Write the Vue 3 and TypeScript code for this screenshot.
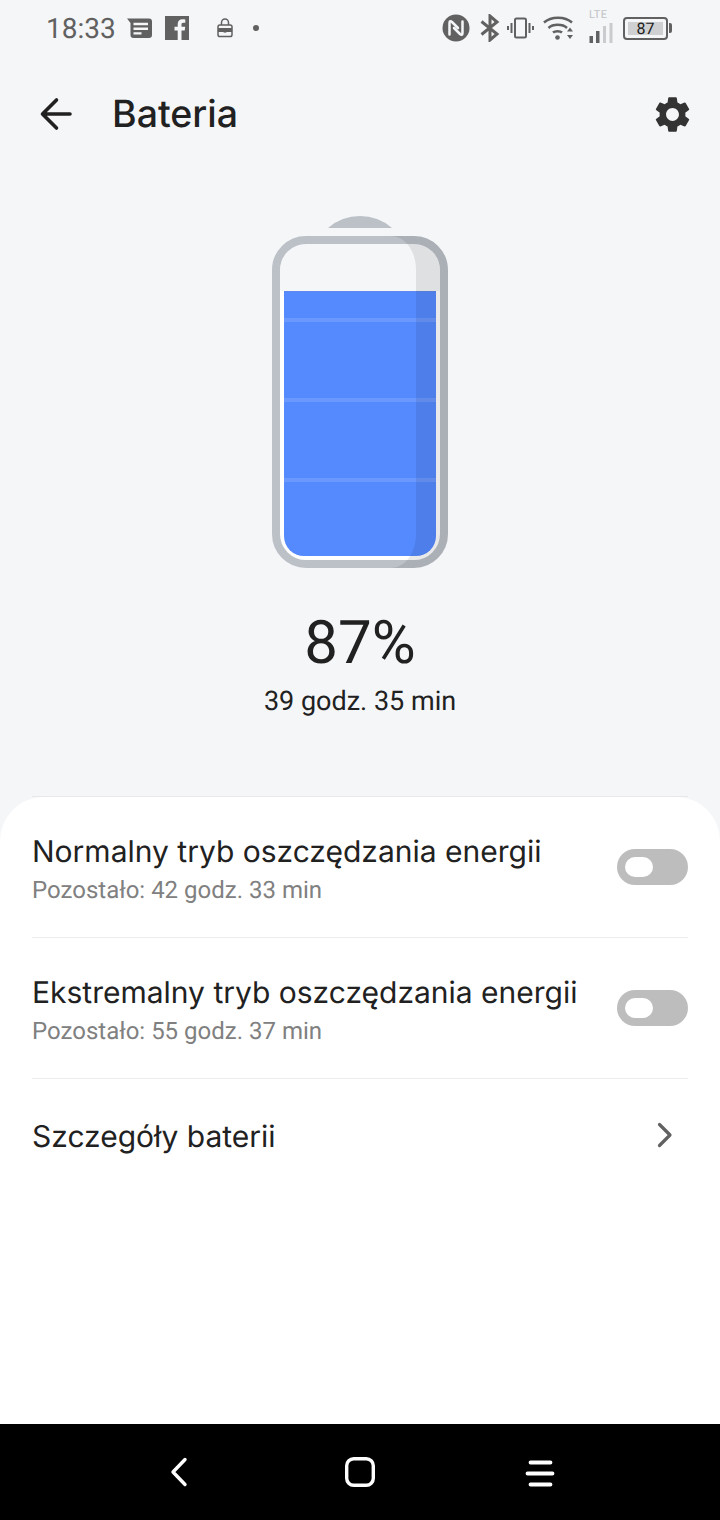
<script setup lang="ts">
interface Mode { title: string; sub: string }
const modes: Mode[] = [
  { title: 'Normalny tryb oszczędzania energii', sub: 'Pozostało: 42 godz. 33 min' },
  { title: 'Ekstremalny tryb oszczędzania energii', sub: 'Pozostało: 55 godz. 37 min' },
]
</script>

<template>
  <div class="page">
    <div class="status">
      <div class="status-left">
        <span class="time">18:33</span>
        <svg class="ic-msg" width="26" height="22" viewBox="0 0 26 22"><path fill="#616161" d="M0 1.500h22a3 3 0 0 1 3 3V18a3 3 0 0 1-3 3H6.500a3 3 0 0 1-3-3V6z"/><path fill="none" stroke="#f5f6f8" stroke-width="2.400" d="M6.500 7h14.500M6.500 11.700h14.500M6.500 16.400h8"/></svg>
        <svg class="ic-fb" width="24" height="24" viewBox="0 0 24 24"><rect width="24" height="24" fill="#616161"/><path fill="#f5f6f8" d="M16.500 24v-9.500h3.200l.5-3.700h-3.700V8.500c0-1.100.3-1.800 1.800-1.800h2V3.400c-.4 0-1.500-.2-2.800-.2-2.900 0-4.800 1.700-4.800 4.900v2.700H9.500v3.700h3.200V24z"/></svg>
        <svg class="ic-lock" width="16" height="20" viewBox="0 0 16 20"><path fill="none" stroke="#616161" stroke-width="1.500" d="M4.500 7V4.500a3.500 3.500 0 0 1 7 0V7"/><rect x="1" y="7" width="14" height="11.500" rx="1.800" fill="none" stroke="#616161" stroke-width="1.500"/><rect x="1" y="10" width="14" height="4" fill="#616161"/><circle cx="8" cy="12.500" r="2.200" fill="#616161"/></svg>
        <span class="dot"></span>
      </div>
      <div class="status-right">
        <svg class="ic-nfc" width="28" height="28" viewBox="0 0 28 28"><circle cx="14" cy="14" r="13.500" fill="#616161"/><path fill="none" stroke="#f5f6f8" stroke-width="2.500" stroke-linecap="round" stroke-linejoin="round" d="M7.500 20.500V9c0-2 1-2.300 2.500-1l6 6M20.500 7.500V19c0 2-1 2.300-2.500 1l-6-6"/></svg>
        <svg class="ic-bt" width="20" height="28" viewBox="0 0 20 28"><path fill="none" stroke="#616161" stroke-width="3" d="M1.500 7.500 17 20l-7 6V2l7 6L1.500 20.500"/></svg>
        <svg class="ic-vib" width="28" height="24" viewBox="0 0 28 24"><rect x="8" y="2.500" width="11" height="19" rx="1.500" fill="none" stroke="#616161" stroke-width="2"/><path fill="none" stroke="#616161" stroke-width="2" d="M4.500 7v10M1 10v4M22.500 7v10M26 10v4"/></svg>
        <svg class="ic-wifi" width="31" height="26" viewBox="0 0 31 26"><path fill="none" stroke="#616161" stroke-width="2.500" d="M1 7.500c7-6.500 21-6.500 28 0M5.500 13c4.500-4.200 14-4.200 18.500 0"/><path fill="none" stroke="#616161" stroke-width="2.500" d="M10 17.500c2-1.800 7-1.800 9 0"/><circle cx="14.500" cy="22.500" r="2.300" fill="#616161"/><path fill="#616161" d="M27 12.500l3 4h-6zM27 24l-3-4h6z"/></svg>
        <div class="signal">
          <span class="lte">LTE</span>
          <svg width="24" height="21" viewBox="0 0 24 21"><rect x="0.500" y="14" width="3.500" height="7" fill="#616161"/><rect x="7" y="9" width="3.500" height="12" fill="#616161"/><rect x="14" y="4" width="3" height="17" fill="#c9cbce"/><rect x="20.500" y="1" width="3" height="20" fill="#c9cbce"/></svg>
        </div>
        <div class="batt-mini">
          <div class="batt-body"><span class="batt-fill">87</span></div>
          <span class="batt-tip"></span>
        </div>
      </div>
    </div>

    <header class="bar">
      <svg class="back" width="34" height="34" viewBox="0 0 34 34"><path fill="none" stroke="#212121" stroke-width="3.600" stroke-linecap="round" stroke-linejoin="round" d="M31 17H4M17.500 3 3.500 17l14 14"/></svg>
      <h1 class="title">Bateria</h1>
      <svg class="gear" width="43" height="43" viewBox="0 0 24 24"><path fill="#333" d="M19.140 12.940c.04-.3.060-.61.060-.94 0-.32-.02-.64-.07-.94l2.030-1.580a.49.490 0 0 0 .12-.61l-1.920-3.320a.488.488 0 0 0-.59-.22l-2.390.96c-.5-.38-1.030-.7-1.620-.94l-.36-2.540a.484.484 0 0 0-.48-.41h-3.840c-.24 0-.43.170-.47.410l-.36 2.540c-.59.240-1.130.57-1.620.94l-2.390-.96c-.22-.08-.47 0-.59.220L2.740 8.870c-.12.210-.08.470.12.610l2.030 1.580c-.05.300-.09.630-.09.940s.02.640.07.940l-2.030 1.580a.49.490 0 0 0-.12.610l1.920 3.320c.12.220.37.290.59.220l2.390-.96c.5.380 1.030.7 1.620.94l.36 2.540c.05.240.24.410.48.410h3.840c.24 0 .44-.17.470-.41l.36-2.540c.59-.24 1.130-.56 1.620-.94l2.390.96c.22.080.47 0 .59-.22l1.920-3.320c.12-.22.07-.47-.12-.61l-2.010-1.580zM12 15.600A3.610 3.610 0 0 1 8.400 12c0-1.980 1.620-3.600 3.600-3.600s3.600 1.620 3.600 3.600-1.620 3.600-3.600 3.600z"/></svg>
    </header>

    <section class="hero">
      <svg class="battery" width="176" height="352" viewBox="0 0 176 352">
        <path fill="#bcc1c8" d="M56 12A48.700 48.700 0 0 1 120 12z"/>
        <rect x="8" y="28" width="160" height="316" rx="26" fill="#fff"/>
        <path fill="#f5f6f8" d="M8 75V54a26 26 0 0 1 26-26h108a26 26 0 0 1 26 26v21z"/>
        <path fill="#558aff" d="M12 75h152v245a20 20 0 0 1-20 20H32a20 20 0 0 1-20-20z"/>
        <rect x="12" y="75" width="152" height="1" fill="#5f88ee"/>
        <rect x="12" y="102" width="152" height="4" fill="#6b98ff"/>
        <rect x="12" y="182" width="152" height="4" fill="#6b98ff"/>
        <rect x="12" y="262" width="152" height="4" fill="#6b98ff"/>
        <rect x="4" y="24" width="168" height="324" rx="30" fill="none" stroke="#bcc1c8" stroke-width="8"/>
        <path fill="#000" fill-opacity=".085" d="M118 20h24a34 34 0 0 1 34 34v264a34 34 0 0 1-34 34h-24c16 0 26-16 26-34V54c0-18-10-34-26-34z"/>
      </svg>
      <div class="percent">87%</div>
      <div class="remain">39 godz. 35 min</div>
    </section>

    <main class="sheet">
      <div v-for="m in modes" :key="m.title" class="row">
        <div class="row-text">
          <div class="row-title">{{ m.title }}</div>
          <div class="row-sub">{{ m.sub }}</div>
        </div>
        <div class="toggle"><span class="knob"></span></div>
      </div>
      <div class="row row-link">
        <div class="row-title">Szczegóły baterii</div>
        <svg class="chev" width="18" height="26" viewBox="0 0 18 26"><path fill="none" stroke="#616161" stroke-width="3.200" stroke-linecap="round" stroke-linejoin="round" d="M3.500 2.500 14 13 3.500 23.500"/></svg>
      </div>
    </main>

    <nav class="nav">
      <svg class="nav-back" width="20" height="30" viewBox="0 0 20 30"><path fill="none" stroke="#fff" stroke-width="3.400" stroke-linecap="round" stroke-linejoin="round" d="M17 2.500 5 15l12 12.500"/></svg>
      <svg class="nav-home" width="32" height="32" viewBox="0 0 32 32"><rect x="2.700" y="2.700" width="26.600" height="26.600" rx="7" fill="none" stroke="#fff" stroke-width="3.400"/></svg>
      <svg class="nav-menu" width="30" height="30" viewBox="0 0 30 30"><path fill="none" stroke="#fff" stroke-width="3.800" stroke-linecap="round" d="M5.500 5.500h20M2.500 16.500h25M5.500 27.500h20"/></svg>
    </nav>
  </div>
</template>

<style scoped>
.page {
  width: 720px;
  height: 1520px;
  display: flex;
  flex-direction: column;
  background: #f5f6f8;
  font-family: Inter, "Noto Sans", sans-serif;
  color: #212121;
  overflow: hidden;
  text-rendering: geometricPrecision;
}
.status {
  height: 56px;
  flex: none;
  display: flex;
  align-items: center;
  justify-content: space-between;
  padding: 0 48px 0 46px;
}
.status-left, .status-right { display: flex; align-items: center; }
.time {
  font-family: Roboto, sans-serif;
  font-size: 28px;
  color: #616161;
  width: 69px;
  margin-right: 12px;
}
.ic-fb { margin-left: 12px; }
.ic-lock { margin-left: 28px; }
.dot {
  width: 6px;
  height: 6px;
  border-radius: 50%;
  background: #616161;
  margin-left: 20px;
}
.ic-bt { margin-left: 10px; }
.ic-vib { margin-left: 7px; }
.ic-wifi { margin-left: 8px; }
.signal {
  position: relative;
  width: 24px;
  height: 30px;
  display: flex;
  align-items: flex-end;
  margin-left: 15px;
}
.lte {
  position: absolute;
  top: -5px;
  left: 0;
  font-family: Roboto, sans-serif;
  font-size: 11px;
  color: #c0c2c5;
  letter-spacing: 0.4px;
}
.batt-mini { display: flex; align-items: center; margin-left: 10px; }
.batt-body {
  width: 45px;
  height: 23px;
  box-sizing: border-box;
  border: 2px solid #616161;
  border-radius: 4px;
  padding: 3px;
  display: flex;
}
.batt-fill {
  flex: 1;
  background: #cfd0d2;
  font-family: Roboto, sans-serif;
  font-size: 16px;
  line-height: 13px;
  text-align: center;
  color: #212121;
}
.batt-tip { width: 3px; height: 10px; background: #616161; border-radius: 0 2px 2px 0; margin-left: 1px; }
.bar {
  height: 116px;
  flex: none;
  display: flex;
  align-items: center;
  padding: 0 26px 0 39px;
  box-sizing: border-box;
}
.title {
  flex: 1;
  margin: 0 0 0 39px;
  font-size: 37.500px;
  font-weight: 500;
  color: #212121;
}
.hero {
  height: 625px;
  flex: none;
  display: flex;
  flex-direction: column;
  align-items: center;
}
.battery { margin-top: 44px; display: block; }
.percent {
  margin-top: 40px;
  font-size: 60px;
  line-height: 70px;
  font-family: Roboto, sans-serif;
  color: #212121;
}
.remain {
  font-size: 27px;
  line-height: 36px;
  margin-top: 5px;
  color: #212121;
  font-family: Roboto, sans-serif;
}
.sheet {
  flex: 1;
  background: #fff;
  border-radius: 44px 44px 0 0;
  padding: 0 32px;
  position: relative;
}
.sheet::before {
  content: "";
  position: absolute;
  top: -1px;
  left: 32px;
  right: 32px;
  height: 1px;
  background: #e8e8ea;
}
.row {
  height: 141px;
  box-sizing: border-box;
  display: flex;
  align-items: center;
  justify-content: space-between;
  border-bottom: 1px solid #ececee;
}
.row-text { padding-top: 4px; }
.row-link { border-bottom: none; height: 116px; padding-right: 14px; }
.chev { margin-top: -5px; }
.row-title { font-size: 30px; line-height: 40px; color: #212121; }
.row-sub { font-size: 24px; line-height: 32px; color: #808080; margin-top: 2px; font-family: Roboto, sans-serif; }
.toggle {
  width: 71px;
  height: 36px;
  border-radius: 18px;
  background: #bdbdbd;
  position: relative;
  flex: none;
}
.knob {
  position: absolute;
  left: 8px;
  top: 8px;
  width: 28px;
  height: 20px;
  border-radius: 10px;
  background: #fff;
}
.nav {
  height: 96px;
  flex: none;
  background: #000;
  display: flex;
  align-items: center;
  padding-left: 168px;
}
.nav-home { margin-left: 156px; }
.nav-menu { margin-left: 149px; }
</style>

<style>
html, body { margin: 0; }
</style>
